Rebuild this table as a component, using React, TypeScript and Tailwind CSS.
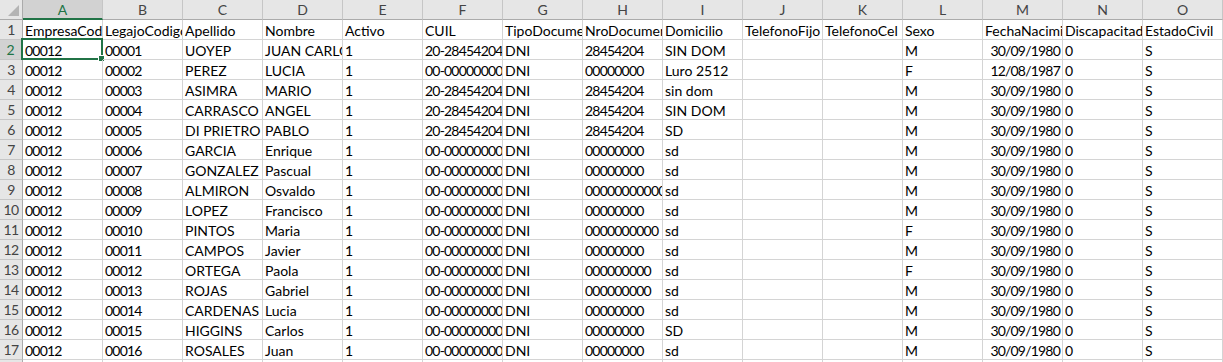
import React from "react";

const letters = ["A", "B", "C", "D", "E", "F", "G", "H", "I", "J", "K", "L", "M", "N", "O"];

const header = [
  "EmpresaCodigo",
  "LegajoCodigo",
  "Apellido",
  "Nombre",
  "Activo",
  "CUIL",
  "TipoDocumento",
  "NroDocumento",
  "Domicilio",
  "TelefonoFijo",
  "TelefonoCel",
  "Sexo",
  "FechaNacimiento",
  "Discapacitado",
  "EstadoCivil",
];

// legajo, apellido, nombre, cuil, nro doc, domicilio, sexo, fecha
const people: [string, string, string, string, string, string, string, string][] = [
  ["00001", "UOYEP", "JUAN CARLOS", "20-28454204-9", "28454204", "SIN DOM", "M", "30/09/1980"],
  ["00002", "PEREZ", "LUCIA", "00-00000000-0", "00000000", "Luro 2512", "F", "12/08/1987"],
  ["00003", "ASIMRA", "MARIO", "20-28454204-9", "28454204", "sin dom", "M", "30/09/1980"],
  ["00004", "CARRASCO", "ANGEL", "20-28454204-9", "28454204", "SIN DOM", "M", "30/09/1980"],
  ["00005", "DI PRIETRO", "PABLO", "20-28454204-9", "28454204", "SD", "M", "30/09/1980"],
  ["00006", "GARCIA", "Enrique", "00-00000000-0", "00000000", "sd", "M", "30/09/1980"],
  ["00007", "GONZALEZ", "Pascual", "00-00000000-0", "00000000", "sd", "M", "30/09/1980"],
  ["00008", "ALMIRON", "Osvaldo", "00-00000000-0", "00000000000", "sd", "M", "30/09/1980"],
  ["00009", "LOPEZ", "Francisco", "00-00000000-0", "00000000", "sd", "M", "30/09/1980"],
  ["00010", "PINTOS", "Maria", "00-00000000-0", "0000000000", "sd", "F", "30/09/1980"],
  ["00011", "CAMPOS", "Javier", "00-00000000-0", "00000000", "sd", "M", "30/09/1980"],
  ["00012", "ORTEGA", "Paola", "00-00000000-0", "000000000", "sd", "F", "30/09/1980"],
  ["00013", "ROJAS", "Gabriel", "00-00000000-0", "000000000", "sd", "M", "30/09/1980"],
  ["00014", "CARDENAS", "Lucia", "00-00000000-0", "00000000", "sd", "M", "30/09/1980"],
  ["00015", "HIGGINS", "Carlos", "00-00000000-0", "00000000", "SD", "M", "30/09/1980"],
  ["00016", "ROSALES", "Juan", "00-00000000-0", "00000000", "sd", "M", "30/09/1980"],
];

const rows: string[][] = [
  header,
  ...people.map((p) => ["00012", p[0], p[1], p[2], "1", p[3], "DNI", p[4], p[5], "", "", p[6], p[7], "0", "S"]),
  Array(15).fill(""),
];

// Lato digits run wider than Calibri's, so numbers get a little tighter
const isNumeric = (v: string) => v.length > 1 && /^[\d\-\/]+$/.test(v);

export default function App() {
  return (
    <div className="h-[362px] w-[1223px] overflow-hidden bg-white font-['Lato',sans-serif] text-[14px] text-black">
      {/* column letters */}
      <div className="flex h-[20px]">
        <div className="relative h-[20px] w-[23px] shrink-0 border-r border-b border-[#ababab] bg-[#e6e6e6]">
          <div className="absolute right-[3px] bottom-[3px] h-0 w-0 border-b-[11px] border-l-[11px] border-b-[#b4b4b4] border-l-transparent" />
        </div>
        {letters.map((l, i) =>
          i === 0 ? (
            <div
              key={l}
              className="flex h-[20px] w-[80px] shrink-0 items-center justify-center border-r border-b-2 border-r-[#c6c6c6] border-b-[#217346] bg-[#d2d2d2] text-[#217346]"
            >
              {l}
            </div>
          ) : (
            <div
              key={l}
              className="flex h-[20px] w-[80px] shrink-0 items-center justify-center border-r border-b border-r-[#c6c6c6] border-b-[#ababab] bg-[#e6e6e6] text-[#444]"
            >
              {l}
            </div>
          )
        )}
      </div>

      {rows.map((row, r) => (
        <div key={r} className="flex h-[20px]">
          {r === 1 ? (
            <div className="flex h-[20px] w-[23px] shrink-0 items-center justify-center border-r-2 border-b border-r-[#217346] border-b-[#c6c6c6] bg-[#d2d2d2] text-[#217346]">
              {r + 1}
            </div>
          ) : (
            <div className="flex h-[20px] w-[23px] shrink-0 items-center justify-center border-r border-b border-r-[#ababab] border-b-[#c6c6c6] bg-[#e6e6e6] text-[#444] tracking-[-0.5px]">
              {r + 1}
            </div>
          )}
          {row.map((v, c) => (
            <div
              key={c}
              className={
                "relative h-[20px] w-[80px] shrink-0 border-r border-b border-[#d4d4d4] leading-[19px] whitespace-nowrap " +
                (c === 12 && r > 0 ? "text-right " : "text-left ") +
                (isNumeric(v) ? "tracking-[-0.8px]" : "")
              }
            >
              <div className="overflow-hidden px-[2px] pt-[1px]">{v}</div>
              {r === 1 && c === 0 && (
                <div className="pointer-events-none absolute -top-[2px] -left-[2px] h-[22px] w-[82px] border-2 border-[#217346]">
                  <div className="absolute -right-[4px] -bottom-[4px] h-[7px] w-[7px] border border-white bg-[#217346]" />
                </div>
              )}
            </div>
          ))}
        </div>
      ))}
    </div>
  );
}
